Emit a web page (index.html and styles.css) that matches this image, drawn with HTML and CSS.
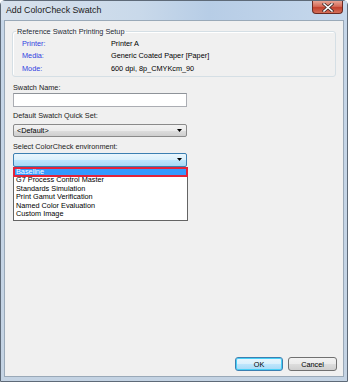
FILE: index.html
```html
<!DOCTYPE html>
<html>
<head>
<meta charset="utf-8">
<link rel="stylesheet" href="styles.css">
</head>
<body>
<div class="window">
  <div class="titlebar">
    <span class="title">Add ColorCheck Swatch</span>
    <div class="close">
      <svg width="12" height="9" viewBox="0 0 12 9"><path d="M2 1 L10 8 M10 1 L2 8" stroke="#3a2a2a" stroke-width="3" stroke-linecap="square"/><path d="M2 1 L10 8 M10 1 L2 8" stroke="#fff" stroke-width="1.6" stroke-linecap="square"/></svg>
    </div>
  </div>
  <div class="client">
    <fieldset class="group">
      <legend>Reference Swatch Printing Setup</legend>
      <div class="info">
        <span class="key">Printer:</span><span>Printer A</span>
        <span class="key">Media:</span><span>Generic Coated Paper [Paper]</span>
        <span class="key">Mode:</span><span>600 dpi, 8p_CMYKcm_90</span>
      </div>
    </fieldset>

    <div class="label l1">Swatch Name:</div>
    <div class="textbox"></div>

    <div class="label l2">Default Swatch Quick Set:</div>
    <div class="combo">
      <span>&lt;Default&gt;</span>
      <svg class="arrow" width="5" height="3" viewBox="0 0 5 3"><path d="M0 0 H5 L2.5 3 Z" fill="#000"/></svg>
    </div>

    <div class="label l3">Select ColorCheck environment:</div>
    <div class="combo-wrap">
      <div class="combo open">
        <span></span>
        <svg class="arrow" width="5" height="3" viewBox="0 0 5 3"><path d="M0 0 H5 L2.5 3 Z" fill="#000"/></svg>
      </div>
      <ul class="list">
        <li class="sel">Baseline</li>
        <li>G7 Process Control Master</li>
        <li>Standards Simulation</li>
        <li>Print Gamut Verification</li>
        <li>Named Color Evaluation</li>
        <li>Custom Image</li>
      </ul>
    </div>

    <div class="buttons">
      <button class="btn default">OK</button>
      <button class="btn">Cancel</button>
    </div>
  </div>
</div>
</body>
</html>
```

FILE: styles.css
```css
* { box-sizing: border-box; }
html, body { margin: 0; padding: 0; background: #fff; }
body { font-family: "Liberation Sans", Arial, sans-serif; font-size: 7.3px; color: #000; }

.window {
  width: 348px;
  height: 382px;
  display: flex;
  flex-direction: column;
  border: 1px solid #5e6a78;
  border-radius: 5px 5px 0 0;
  background: linear-gradient(to bottom, #dbe5ef 0px, #c6d6e8 20px, #c4d3e3 100%);
}

.titlebar {
  height: 19px;
  display: flex;
  align-items: flex-start;
  justify-content: space-between;
  padding-left: 5px;
  background: linear-gradient(to right, #d7e1ec 0%, #c9d9ea 40%, #b7cde6 60%, #c6d8ec 100%);
}
.title {
  font-family: "Liberation Sans", Arial, sans-serif;
  font-size: 8.8px;
  line-height: 9px;
  margin-top: 5px;
  color: #1a1a1a;
}
.close {
  width: 31px;
  height: 13px;
  margin-right: 4px;
  border: 1px solid #6b2a22;
  border-top: none;
  border-radius: 0 0 4px 4px;
  background: linear-gradient(to bottom, #e8a494 0%, #d56b58 45%, #c2402c 55%, #d4705a 100%);
  display: flex;
  align-items: center;
  justify-content: center;
}

.client {
  flex: 1;
  margin: 0 3px 4px 3px;
  border: 1px solid #9aa9b8;
  background: #f0f0f0;
  display: flex;
  flex-direction: column;
}

.group {
  margin: 6px 7px 0 7px;
  padding: 0 3px 1px 3px;
  border: 1px solid #d5dfe5;
  border-radius: 3px;
  box-shadow: inset 1px 1px 0 #fff;
}
.group legend {
  padding: 0 1px;
  line-height: 9px;
  color: #1e2a36;
}
.info {
  display: grid;
  grid-template-columns: 89px 1fr;
  grid-auto-rows: 12.5px;
  align-items: center;
  margin-left: 6px;
  margin-top: 1px;
}
.key { color: #2f3fe0; }

.label { margin-left: 8px; line-height: 9px; color: #1a1a1a; }
.l1 { margin-top: 6px; }
.l2 { margin-top: 4px; }
.l3 { margin-top: 5px; }

.textbox {
  margin: 1px 0 0 8px;
  width: 174px;
  height: 14px;
  background: #fff;
  border: 1px solid #abadb3;
  border-top-color: #8e9399;
}

.combo {
  margin: 4px 0 0 8px;
  width: 174px;
  height: 13px;
  border: 1px solid #8a8a8a;
  border-radius: 2px;
  background: linear-gradient(to bottom, #f2f2f2 0%, #ebebeb 50%, #dddddd 51%, #cfcfcf 100%);
  display: flex;
  align-items: center;
  justify-content: space-between;
  padding: 0 4px 0 3px;
}
.arrow { display: block; }

.combo-wrap { position: relative; margin-top: 2px; }
.combo.open {
  margin-top: 0;
  height: 14px;
  border-color: #3c7fb1;
  background: linear-gradient(to bottom, #eaf6fd 0%, #d9f0fc 50%, #bee6fd 51%, #a7d9f5 100%);
}
.list {
  position: absolute;
  left: 8px;
  top: 14px;
  width: 175px;
  height: 54px;
  margin: 0;
  padding: 0;
  list-style: none;
  background: #fff;
  border: 1px solid #646464;
}
.list li {
  height: 8.6px;
  line-height: 8.6px;
  padding-left: 2px;
  color: #000;
}
.list li.sel {
  background: #3399ff;
  color: #fff;
  outline: 2px solid #e2233a;
  outline-offset: -1px;
  position: relative;
}

.buttons {
  margin-top: auto;
  display: flex;
  justify-content: flex-end;
  gap: 5px;
  padding: 0 6px 5px 0;
}
.btn {
  font-family: "Liberation Sans", Arial, sans-serif;
  font-size: 7.3px;
  width: 49px;
  height: 14px;
  padding: 0;
  border: 1px solid #707070;
  border-radius: 3px;
  background: linear-gradient(to bottom, #f2f2f2 0%, #ebebeb 50%, #dddddd 51%, #cfcfcf 100%);
  color: #000;
}
.btn.default {
  width: 48px;
  border-color: #3c7fb1;
  box-shadow: inset 0 0 0 1px #48d0f7;
  background: linear-gradient(to bottom, #eaf6fd 0%, #d9f0fc 50%, #bee6fd 51%, #a7d9f5 100%);
}
```
